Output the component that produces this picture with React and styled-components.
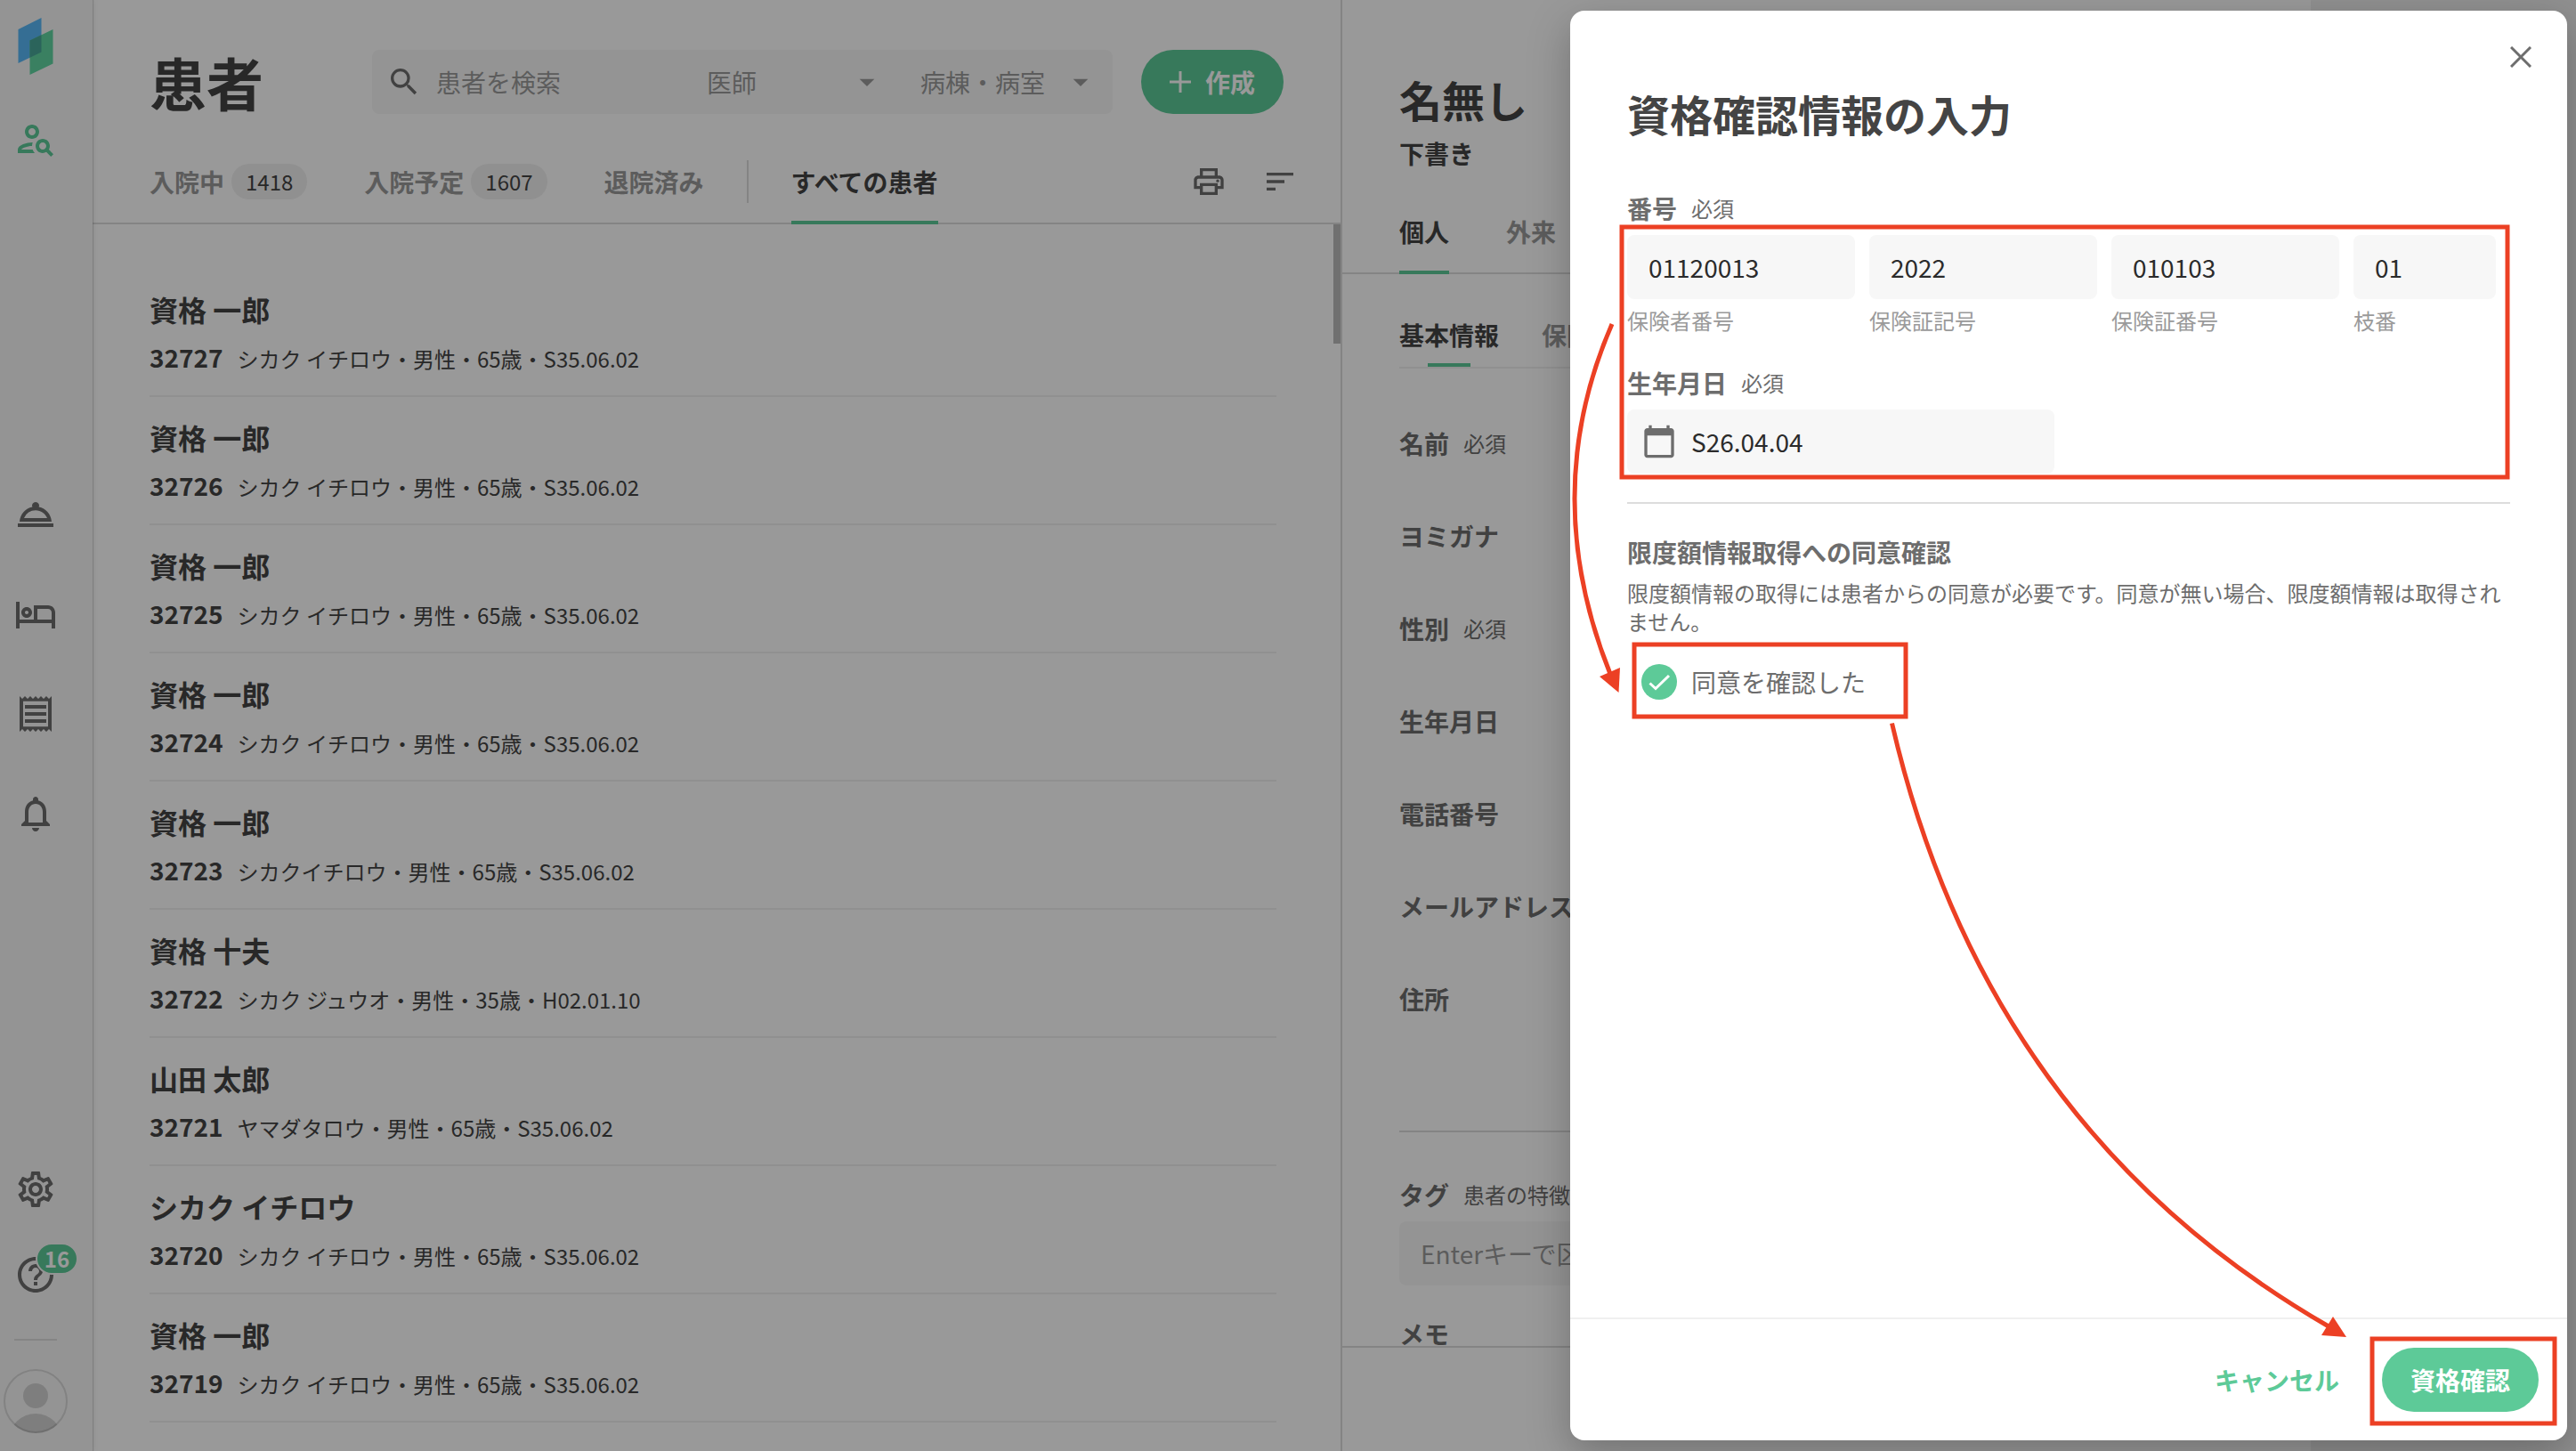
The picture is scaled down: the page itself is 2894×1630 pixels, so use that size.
import React from "react";
import styled, { createGlobalStyle } from "styled-components";
import {
  MdArrowDropDown,
  MdCalendarToday,
  MdHelpOutline,
  MdOutlineHotel,
  MdOutlineNotifications,
  MdOutlinePersonSearch,
  MdOutlinePrint,
  MdOutlineReceipt,
  MdOutlineRoomService,
  MdOutlineSettings,
  MdSearch,
  MdSort,
} from "react-icons/md";

const patients = [
  { id: "32727", name: "資格 一郎", detail: "シカク イチロウ・男性・65歳・S35.06.02" },
  { id: "32726", name: "資格 一郎", detail: "シカク イチロウ・男性・65歳・S35.06.02" },
  { id: "32725", name: "資格 一郎", detail: "シカク イチロウ・男性・65歳・S35.06.02" },
  { id: "32724", name: "資格 一郎", detail: "シカク イチロウ・男性・65歳・S35.06.02" },
  { id: "32723", name: "資格 一郎", detail: "シカクイチロウ・男性・65歳・S35.06.02" },
  { id: "32722", name: "資格 十夫", detail: "シカク ジュウオ・男性・35歳・H02.01.10" },
  { id: "32721", name: "山田 太郎", detail: "ヤマダタロウ・男性・65歳・S35.06.02" },
  { id: "32720", name: "シカク イチロウ", detail: "シカク イチロウ・男性・65歳・S35.06.02" },
  { id: "32719", name: "資格 一郎", detail: "シカク イチロウ・男性・65歳・S35.06.02" },
  { id: "32718", name: "シカク ジロウ" },
];

const fields = [
  { label: "名前", required: true },
  { label: "ヨミガナ" },
  { label: "性別", required: true },
  { label: "生年月日" },
  { label: "電話番号" },
  { label: "メールアドレス" },
  { label: "住所" },
];

const insuranceInputs = [
  { value: "01120013", caption: "保険者番号", width: 256 },
  { value: "2022", caption: "保険証記号", width: 256 },
  { value: "010103", caption: "保険証番号", width: 256 },
  { value: "01", caption: "枝番", width: 160 },
];

const Logo = () => (
  <LogoSvg viewBox="0 0 40 64">
    <path d="M.5 13 26.5 0v38.5L.5 51z" fill="#59b8f7" />
    <path d="M13.5 25.5 39.5 13v38.5L13.5 64z" fill="#61d5a2" />
    <path d="M13.5 25.5 26.5 19.2v19.3l-13 6.3z" fill="#49a798" />
  </LogoSvg>
);

const Avatar = () => (
  <AvatarSvg viewBox="0 0 72 72">
    <clipPath id="avatar">
      <circle cx="36" cy="36" r="36" />
    </clipPath>
    <g clipPath="url(#avatar)" fill="#d3d3d3">
      <circle cx="36" cy="30" r="14" />
      <circle cx="36" cy="80" r="30" />
    </g>
    <circle cx="36" cy="36" r="35" fill="none" stroke="#000" strokeOpacity="0.12" strokeWidth="2" />
  </AvatarSvg>
);

const Sidebar = () => (
  <Side>
    <Logo />
    <SideTop>
      <MdOutlinePersonSearch color="#5dca98" />
    </SideTop>
    <SideMenu>
      <MdOutlineRoomService />
      <MdOutlineHotel />
      <MdOutlineReceipt />
      <MdOutlineNotifications />
    </SideMenu>
    <SideBottom>
      <MdOutlineSettings />
      <Help>
        <MdHelpOutline />
        <HelpCount>16</HelpCount>
      </Help>
    </SideBottom>
    <SideLine />
    <Avatar />
  </Side>
);

const PatientList = () => (
  <ListPanel>
    <ListHeader>
      <PageTitle>患者</PageTitle>
      <SearchBar>
        <SearchInput>
          <MdSearch color="#6d6d6d" />
          患者を検索
        </SearchInput>
        <Select>
          医師
          <MdArrowDropDown />
        </Select>
        <Select>
          病棟・病室
          <MdArrowDropDown />
        </Select>
      </SearchBar>
      <CreateButton>
        <svg width="24" height="24" viewBox="0 0 24 24" stroke="#fff" strokeWidth="3">
          <path d="M12 0v24M0 12h24" />
        </svg>
        作成
      </CreateButton>
    </ListHeader>
    <ListTabs>
      <Tab>
        入院中<Count>1418</Count>
      </Tab>
      <Tab>
        入院予定<Count>1607</Count>
      </Tab>
      <Tab>退院済み</Tab>
      <TabDivider />
      <Tab $active>すべての患者</Tab>
      <TabActions>
        <MdOutlinePrint />
        <MdSort />
      </TabActions>
    </ListTabs>
    <Rows>
      {patients.map((patient) => (
        <Row key={patient.id}>
          <Name>{patient.name}</Name>
          {patient.detail && (
            <Sub>
              <b>{patient.id}</b>
              <span>{patient.detail}</span>
            </Sub>
          )}
        </Row>
      ))}
      <ScrollThumb />
    </Rows>
  </ListPanel>
);

const PatientDetail = () => (
  <DetailPanel>
    <DetailTitle>名無し</DetailTitle>
    <Draft>下書き</Draft>
    <DetailTabs>
      <Tab $active>個人</Tab>
      <Tab>外来</Tab>
    </DetailTabs>
    <DetailBody>
      <SubTabs>
        <SubTab $active>基本情報</SubTab>
        <SubTab>保険</SubTab>
      </SubTabs>
      <Fields>
        {fields.map((field) => (
          <Field key={field.label}>
            {field.label}
            {field.required && <Hint>必須</Hint>}
          </Field>
        ))}
      </Fields>
      <TagSection>
        <Label>
          タグ<Hint>患者の特徴</Hint>
        </Label>
        <TagInput>Enterキーで区切り</TagInput>
        <MemoLabel>メモ</MemoLabel>
      </TagSection>
    </DetailBody>
    <DetailFooter />
  </DetailPanel>
);

const QualificationDialog = () => (
  <Dialog>
    <Close>
      <svg width="24" height="24" viewBox="0 0 24 24" stroke="#6d6d6d" strokeWidth="3">
        <path d="M1 1l22 22M23 1L1 23" />
      </svg>
    </Close>
    <DialogBody>
      <DialogTitle>資格確認情報の入力</DialogTitle>
      <Label>
        番号<Hint>必須</Hint>
      </Label>
      <InputRow>
        {insuranceInputs.map((input) => (
          <InputColumn key={input.caption} $width={input.width}>
            <Input>{input.value}</Input>
            <Caption>{input.caption}</Caption>
          </InputColumn>
        ))}
      </InputRow>
      <BirthLabel>
        生年月日<Hint>必須</Hint>
      </BirthLabel>
      <DateInput>
        <MdCalendarToday />
        S26.04.04
      </DateInput>
      <Divider />
      <Label>限度額情報取得への同意確認</Label>
      <Note>
        限度額情報の取得には患者からの同意が必要です。同意が無い場合、限度額情報は取得されません。
      </Note>
      <Consent>
        <svg width="40" height="40" viewBox="0 0 40 40">
          <circle cx="20" cy="20" r="20" fill="#5dca98" />
          <path d="M9.5 21.5 16 27.5 31 13" fill="none" stroke="#fff" strokeWidth="3" />
        </svg>
        同意を確認した
      </Consent>
    </DialogBody>
    <DialogFooter>
      <Cancel>キャンセル</Cancel>
      <Submit>資格確認</Submit>
    </DialogFooter>
  </Dialog>
);

// red boxes and arrows that point out the order of the steps
const Annotations = () => (
  <AnnotationSvg viewBox="0 0 2894 1630">
    <g fill="none" stroke="#ec4024" strokeWidth="5">
      <rect x="1822" y="255" width="995" height="281" />
      <rect x="1836" y="724" width="305" height="81" />
      <rect x="2665" y="1504" width="205" height="95" />
      <path d="M1811 364Q1728 555 1809 757" />
      <path d="M2125.5 812.5Q2231 1268 2616 1490" />
    </g>
    <g fill="#ec4024">
      <path d="M1818.5 778 1797 760l23-10z" />
      <path d="M2636 1502l-15-23-13 21z" />
    </g>
  </AnnotationSvg>
);

const App = () => {
  return (
    <>
      <GlobalStyle />
      <Page>
        <Sidebar />
        <PatientList />
        <PatientDetail />
        <Overlay />
        <QualificationDialog />
        <Annotations />
      </Page>
    </>
  );
};

const GlobalStyle = createGlobalStyle`
  * {
    box-sizing: border-box;
  }
  body {
    margin: 0;
    font-family: "Noto Sans CJK JP", sans-serif;
    font-size: 28px;
    line-height: 40px;
    color: #444;
  }
  svg {
    display: block;
    flex: none;
  }
`;
const Page = styled.div`
  position: relative;
  display: flex;
  width: 2894px;
  height: 1630px;
  overflow: hidden;
  background: #f0f0f0;
`;

const Side = styled.nav`
  position: relative;
  z-index: 1;
  flex: none;
  width: 104px;
  padding: 20px 24px 0 0;
  display: flex;
  flex-direction: column;
  align-items: center;
  background: #f7f7f7;
  color: #6d6d6d;
  font-size: 48px;
  box-shadow: 1px 0 1px rgba(0, 0, 0, 0.14), 2px 0 6px rgba(0, 0, 0, 0.05);
`;
const LogoSvg = styled.svg`
  width: 40px;
  height: 64px;
`;
const SideTop = styled.div`
  margin-top: 48px;
`;
const SideMenu = styled.div`
  margin-top: 374px;
  display: flex;
  flex-direction: column;
  gap: 64px;
`;
const SideBottom = styled.div`
  margin-top: 374px;
  display: flex;
  flex-direction: column;
  gap: 48px;
`;
const Help = styled.div`
  position: relative;
`;
const HelpCount = styled.span`
  position: absolute;
  top: -12px;
  left: 24px;
  width: 48px;
  height: 36px;
  border: 2px solid #f7f7f7;
  border-radius: 18px;
  background: #5dca98;
  color: #fff;
  font-size: 24px;
  font-weight: 700;
  line-height: 31px;
  text-align: center;
`;
const SideLine = styled.div`
  width: 48px;
  height: 2px;
  margin: 48px 0 32px;
  background: #ddd;
`;
const AvatarSvg = styled.svg`
  width: 72px;
  height: 72px;
`;

const ListPanel = styled.section`
  flex: none;
  width: 1404px;
  display: flex;
  flex-direction: column;
  padding-top: 56px;
  background: #fff;
  border-right: 2px solid #ddd;
`;
const ListHeader = styled.div`
  display: flex;
  align-items: center;
  height: 72px;
  padding: 0 64px;
`;
const PageTitle = styled.h1`
  margin: 0 0 3px;
  font-size: 64px;
  line-height: 72px;
  font-weight: 700;
`;
const SearchBar = styled.div`
  display: flex;
  width: 832px;
  height: 72px;
  margin-left: auto;
  border-radius: 8px;
  background: #f7f7f7;
  color: #9a9a9a;

  svg {
    width: 40px;
    height: 40px;
  }
`;
const SearchInput = styled.div`
  flex: 1;
  display: flex;
  align-items: center;
  gap: 16px;
  padding-left: 16px;
`;
const Select = styled.div`
  width: 240px;
  display: flex;
  align-items: center;
  justify-content: space-between;
  padding: 0 16px 0 24px;
`;
const CreateButton = styled.div`
  display: flex;
  align-items: center;
  gap: 16px;
  height: 72px;
  margin-left: 32px;
  padding: 0 32px;
  border-radius: 36px;
  background: #5dca98;
  color: #fff;
  font-weight: 700;
`;
const ListTabs = styled.div`
  display: flex;
  align-items: center;
  height: 96px;
  margin-top: 28px;
  padding: 0 48px 0 64px;
  box-shadow: inset 0 -2px #ddd;
`;
const Tab = styled.div`
  display: flex;
  align-items: center;
  height: 96px;
  border-top: 4px solid transparent;
  border-bottom: 4px solid ${({ $active }) => ($active ? "#5dca98" : "transparent")};
  color: ${({ $active }) => ($active ? "#444" : "#9a9a9a")};
  font-weight: 700;
  white-space: nowrap;

  & + & {
    margin-left: 64px;
  }
`;
const Count = styled.span`
  height: 40px;
  margin-left: 8px;
  padding: 0 16px;
  border-radius: 20px;
  background: #f0f0f0;
  color: #444;
  font-size: 24px;
  font-weight: 400;
  line-height: 40px;
`;
const TabDivider = styled.div`
  width: 2px;
  height: 48px;
  margin: 0 48px;
  background: #ddd;
`;
const TabActions = styled.div`
  display: flex;
  gap: 40px;
  margin-left: auto;
  color: #6d6d6d;
  font-size: 40px;
`;
const Rows = styled.div`
  position: relative;
  flex: 1;
  min-height: 0;
  overflow: hidden;
  padding: 50px 72px 0 64px;
`;
const Row = styled.div`
  height: 144px;
  padding-top: 21px;
  border-bottom: 2px solid #f0f0f0;
`;
const Name = styled.div`
  font-size: 32px;
  line-height: 48px;
  font-weight: 700;
`;
const Sub = styled.div`
  display: flex;
  align-items: baseline;
  gap: 16px;
  margin-top: 10px;
  line-height: 40px;

  span {
    font-size: 24px;
  }
`;
const ScrollThumb = styled.div`
  position: absolute;
  top: 0;
  right: 0;
  width: 8px;
  height: 134px;
  background: #bbb;
`;

const DetailPanel = styled.section`
  flex: none;
  width: 1088px;
  display: flex;
  flex-direction: column;
  padding-top: 75px;
  background: #fff;
`;
const DetailTitle = styled.h2`
  margin: 0;
  padding: 0 64px;
  font-size: 48px;
  line-height: 72px;
  font-weight: 700;
`;
const Draft = styled.div`
  margin: 5px 0 20px;
  padding: 0 64px;
  font-weight: 700;
`;
const DetailTabs = styled.div`
  display: flex;
  height: 96px;
  padding: 0 64px;
  box-shadow: inset 0 -2px #ddd;
`;
const DetailBody = styled.div`
  flex: 1;
  min-height: 0;
  overflow: hidden;
  padding: 28px 64px 0;
`;
const SubTabs = styled.div`
  display: flex;
  gap: 48px;
  height: 78px;
  border-bottom: 2px solid #f0f0f0;
`;
const SubTab = styled.div`
  display: flex;
  flex-direction: column;
  align-items: center;
  justify-content: space-between;
  padding-top: 20px;
  color: ${({ $active }) => ($active ? "#444" : "#9a9a9a")};
  font-weight: 700;

  &::after {
    content: "";
    width: 48px;
    height: 4px;
    background: ${({ $active }) => ($active ? "#5dca98" : "transparent")};
  }
`;
const Fields = styled.div`
  padding: 32px 0 96px;
  border-bottom: 2px solid #ddd;
`;
const Label = styled.div`
  display: flex;
  align-items: center;
  gap: 16px;
  height: 40px;
  color: #6d6d6d;
  font-weight: 700;
`;
const Field = styled(Label)`
  height: 104px;
`;
const Hint = styled.span`
  font-size: 24px;
  font-weight: 400;
`;
const TagSection = styled.div`
  padding-top: 50px;
`;
const TagInput = styled.div`
  height: 72px;
  margin-top: 10px;
  padding: 0 24px;
  border-radius: 8px;
  background: #f7f7f7;
  color: #9a9a9a;
  line-height: 72px;
`;
const MemoLabel = styled(Label)`
  margin-top: 34px;
`;
const DetailFooter = styled.div`
  flex: none;
  height: 118px;
  border-top: 2px solid #ddd;
`;

const Overlay = styled.div`
  position: absolute;
  inset: 0;
  z-index: 2;
  background: rgba(0, 0, 0, 0.4);
`;
const Dialog = styled.div`
  position: absolute;
  top: 12px;
  right: 10px;
  bottom: 12px;
  z-index: 3;
  width: 1120px;
  display: flex;
  flex-direction: column;
  border-radius: 16px;
  background: #fff;
  box-shadow: 0 16px 48px rgba(0, 0, 0, 0.25);
`;
const Close = styled.div`
  position: absolute;
  top: 40px;
  right: 40px;
`;
const DialogBody = styled.div`
  flex: 1;
  padding: 79px 64px 0;
`;
const DialogTitle = styled.h2`
  margin: 0 0 51px;
  font-size: 48px;
  line-height: 72px;
  font-weight: 700;
`;
const InputRow = styled.div`
  display: flex;
  gap: 16px;
  margin-top: 10px;
`;
const InputColumn = styled.div`
  width: ${({ $width }) => $width}px;
`;
const Input = styled.div`
  display: flex;
  align-items: center;
  height: 72px;
  padding: 0 24px;
  border-radius: 8px;
  background: #f7f7f7;
  color: #2b2b2b;
`;
const Caption = styled.div`
  margin-top: 8px;
  color: #9a9a9a;
  font-size: 24px;
  line-height: 32px;
`;
const BirthLabel = styled(Label)`
  margin-top: 34px;
`;
const DateInput = styled(Input)`
  width: 480px;
  gap: 16px;
  margin-top: 10px;
  padding: 0 16px;

  svg {
    width: 40px;
    height: 40px;
    color: #6d6d6d;
  }
`;
const Divider = styled.div`
  height: 2px;
  margin: 32px 0 34px;
  background: #ddd;
`;
const Note = styled.p`
  margin: 10px 0 0;
  color: #6d6d6d;
  font-size: 24px;
  line-height: 32px;
`;
const Consent = styled.div`
  display: flex;
  align-items: center;
  gap: 16px;
  margin: 32px 0 0 16px;
  color: #6d6d6d;
`;
const DialogFooter = styled.div`
  display: flex;
  justify-content: flex-end;
  gap: 16px;
  padding: 32px;
  border-top: 2px solid #f0f0f0;
  font-weight: 700;
  line-height: 72px;
`;
const Cancel = styled.div`
  padding: 0 32px;
  color: #5dca98;
`;
const Submit = styled.div`
  padding: 0 32px;
  border-radius: 36px;
  background: #5dca98;
  color: #fff;
`;
const AnnotationSvg = styled.svg`
  position: absolute;
  inset: 0;
  z-index: 4;
  width: 2894px;
  height: 1630px;
`;

export default App;
